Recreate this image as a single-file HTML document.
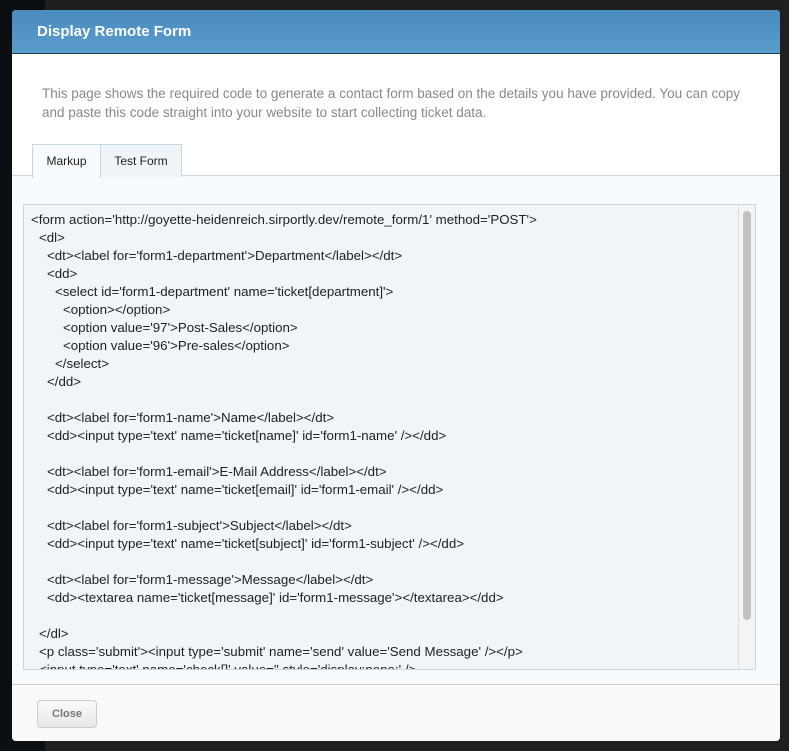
<!DOCTYPE html>
<html><head><style>
body{margin:0;width:789px;height:751px;background:#1f1f1f;position:relative;overflow:hidden;font-family:"Liberation Sans",sans-serif}
.m{position:absolute;left:12px;top:10px;width:768px;height:731px;background:#fff;border-radius:4px;overflow:hidden}
.h{height:43px;background:linear-gradient(#4a8bc0,#5a9ccb);border-bottom:1px solid #1c3d5a;color:#fff;font-weight:bold;font-size:15px;line-height:44px;padding-left:25px}
.p{position:absolute;left:30px;top:74px;width:705px;color:#888;font-size:13.5px;line-height:19px}
.tab{position:absolute;top:134px;height:32px;border:1px solid #c8d6e0;border-bottom:none;font-size:12px;line-height:32px;text-align:center;color:#222}
.panel{position:absolute;left:0;top:165px;width:768px;height:509px;background:#f8fbfd;border-top:1px solid #c8d6e0}
.ta{position:absolute;left:11px;top:28px;width:731px;height:464px;background:#eff5f9;border:1px solid #c8d6e0;overflow:hidden}
.code{position:absolute;left:7px;top:6px;font-size:13.3px;line-height:18px;color:#222;white-space:nowrap}
.code div{height:18px}
.sb{position:absolute;right:0;top:0;width:16px;height:464px;background:#f4f4f4;border-left:1px solid #ddd}
.th{position:absolute;left:4px;top:6px;width:8px;height:409px;background:#c2c2c2;border-radius:4px}
.f{position:absolute;left:0;top:674px;width:768px;height:57px;background:#f9f9f9;border-top:1px solid #ccc}
.b{position:absolute;left:25px;top:15px;width:58px;height:26px;border:1px solid #ccc;border-radius:4px;background:linear-gradient(#fafafa,#e8e8e8);color:#777;font-weight:bold;font-size:11px;line-height:26px;text-align:center}
</style></head><body>
<div style="position:absolute;left:0;top:0;width:45px;height:751px;background:#0c0f12"></div>
<div class="m">
<div class="h">Display Remote Form</div>
<div class="p">This page shows the required code to generate a contact form based on the details you have provided. You can copy and paste this code straight into your website to start collecting ticket data.</div>
<div class="panel">
<div class="ta"><div class="code"><div>&lt;form action='http://goyette-heidenreich.sirportly.dev/remote_form/1' method='POST'&gt;</div><div style="padding-left:8px">&lt;dl&gt;</div><div style="padding-left:16px">&lt;dt&gt;&lt;label for='form1-department'&gt;Department&lt;/label&gt;&lt;/dt&gt;</div><div style="padding-left:16px">&lt;dd&gt;</div><div style="padding-left:24px">&lt;select id='form1-department' name='ticket[department]'&gt;</div><div style="padding-left:32px">&lt;option&gt;&lt;/option&gt;</div><div style="padding-left:32px">&lt;option value='97'&gt;Post-Sales&lt;/option&gt;</div><div style="padding-left:32px">&lt;option value='96'&gt;Pre-sales&lt;/option&gt;</div><div style="padding-left:24px">&lt;/select&gt;</div><div style="padding-left:16px">&lt;/dd&gt;</div><div></div><div style="padding-left:16px">&lt;dt&gt;&lt;label for='form1-name'&gt;Name&lt;/label&gt;&lt;/dt&gt;</div><div style="padding-left:16px">&lt;dd&gt;&lt;input type='text' name='ticket[name]' id='form1-name' /&gt;&lt;/dd&gt;</div><div></div><div style="padding-left:16px">&lt;dt&gt;&lt;label for='form1-email'&gt;E-Mail Address&lt;/label&gt;&lt;/dt&gt;</div><div style="padding-left:16px">&lt;dd&gt;&lt;input type='text' name='ticket[email]' id='form1-email' /&gt;&lt;/dd&gt;</div><div></div><div style="padding-left:16px">&lt;dt&gt;&lt;label for='form1-subject'&gt;Subject&lt;/label&gt;&lt;/dt&gt;</div><div style="padding-left:16px">&lt;dd&gt;&lt;input type='text' name='ticket[subject]' id='form1-subject' /&gt;&lt;/dd&gt;</div><div></div><div style="padding-left:16px">&lt;dt&gt;&lt;label for='form1-message'&gt;Message&lt;/label&gt;&lt;/dt&gt;</div><div style="padding-left:16px">&lt;dd&gt;&lt;textarea name='ticket[message]' id='form1-message'&gt;&lt;/textarea&gt;&lt;/dd&gt;</div><div></div><div style="padding-left:8px">&lt;/dl&gt;</div><div style="padding-left:8px">&lt;p class='submit'&gt;&lt;input type='submit' name='send' value='Send Message' /&gt;&lt;/p&gt;</div><div style="padding-left:8px">&lt;input type='text' name='check[]' value='' style='display:none;' /&gt;</div></div>
<div class="sb"><div class="th"></div></div>
</div>
</div>
<div class="tab" style="left:20px;width:67px;background:#f8fbfd;height:33px;z-index:2">Markup</div>
<div class="tab" style="left:88px;width:80px;background:#eef4f8">Test Form</div>
<div class="f"><div class="b">Close</div></div>
</div>
</body></html>
